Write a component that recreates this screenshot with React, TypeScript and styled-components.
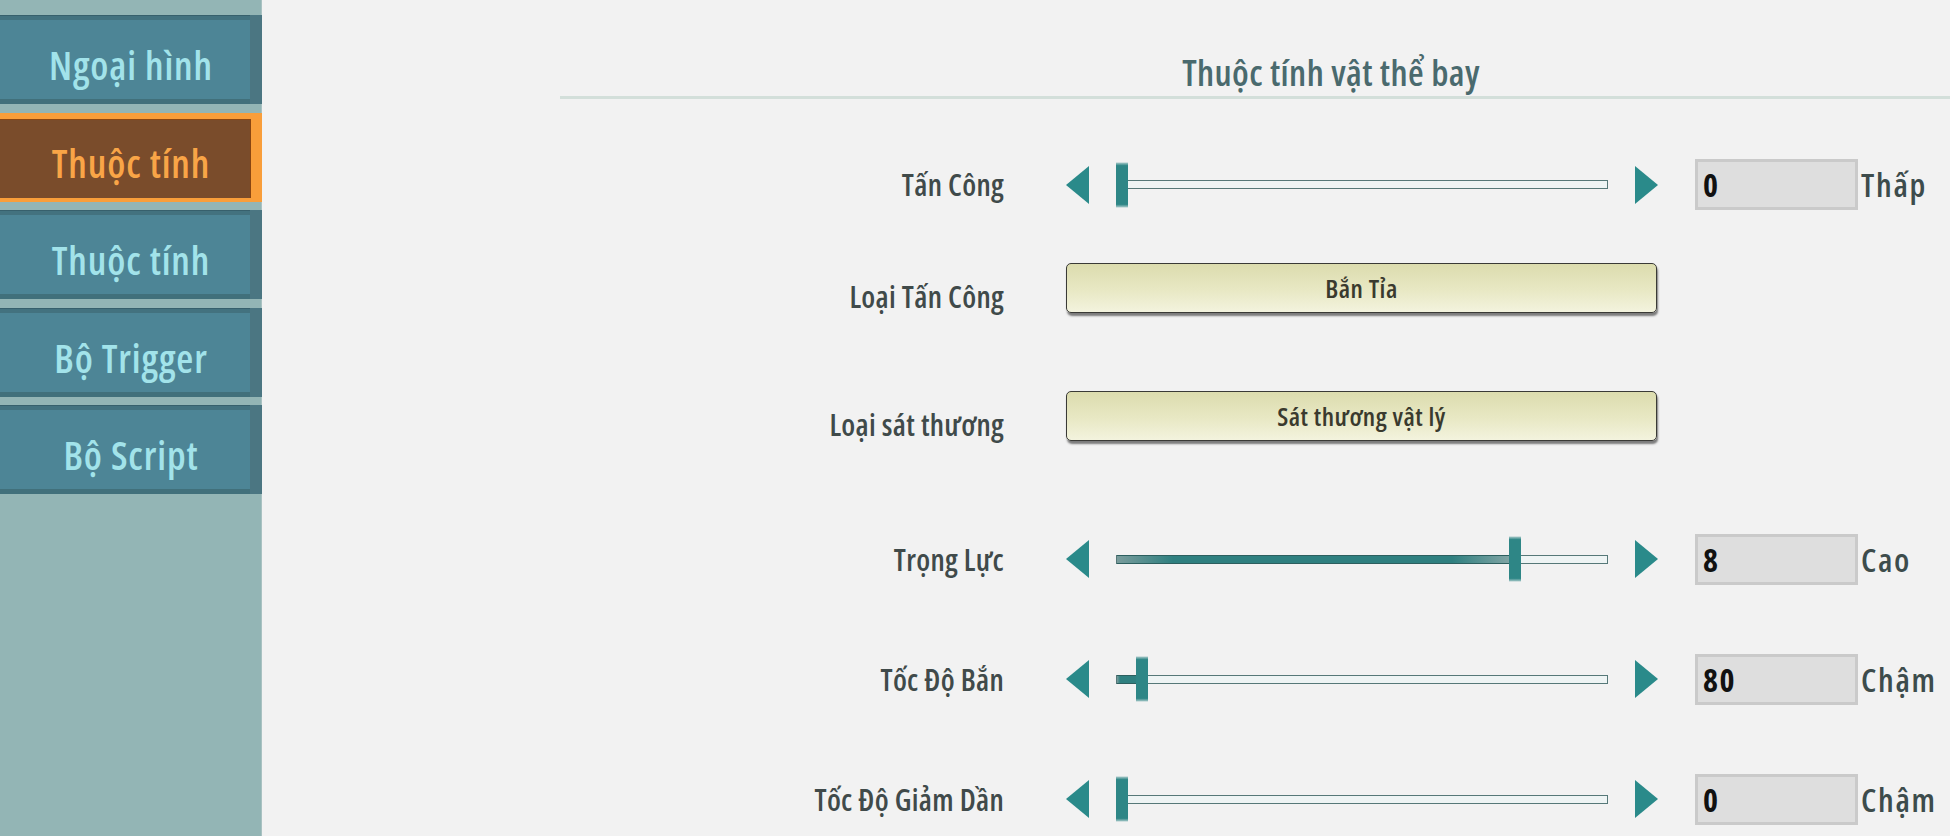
import React from "react";
import styled, { createGlobalStyle } from "styled-components";

const FONT = `"Open Sans", "Noto Sans", "DejaVu Sans", sans-serif`;

const Global = createGlobalStyle`
  html, body { margin: 0; padding: 0; background: #f2f2f2; }
  body { font-family: ${FONT}; font-stretch: 75%; }
  #root { width: 1950px; height: 836px; overflow: hidden; }
`;

const Page = styled.div`
  display: flex;
  width: 1950px;
  height: 836px;
  overflow: hidden;
  background: #f2f2f2;
  font-family: ${FONT};
  font-stretch: 75%;
`;

const Sidebar = styled.nav`
  flex: 0 0 262px;
  display: flex;
  flex-direction: column;
  gap: 8.5px;
  padding-top: 15px;
  background: #93b5b5;
  box-shadow: inset -1px 0 0 #a9c2c2;
`;

const NavButton = styled.div<{ $active?: boolean }>`
  height: 89px;
  box-sizing: border-box;
  display: flex;
  align-items: center;
  justify-content: center;
  padding-top: 10px;
  font-weight: 600;
  font-size: 39px;
  letter-spacing: 0.9px;
  color: ${(p) => (p.$active ? "#f9a547" : "#a2e3ea")};
  background: ${(p) => (p.$active ? "#7a4c2b" : "#4d8596")};
  box-shadow: ${(p) =>
    p.$active
      ? "inset -11px 0 0 #f99e3a, inset 0 6px 0 #f99e3a, inset 0 -4px 0 #f99e3a, inset -12px 0 0 #8a4612, inset 0 7px 0 #8a4612"
      : "inset -12px 0 0 #4b7682, inset 0 1px 0 #37606c, inset 0 5px 0 #43727f, inset 0 -5px 0 #41707b"};
`;

const Main = styled.main`
  flex: 1 1 auto;
  min-width: 0;
  overflow: hidden;
  display: flex;
  flex-direction: column;
  padding-top: 49px;
`;

const Header = styled.div`
  margin-left: 298px;
  width: 1542px;
  flex: 0 0 auto;
  text-align: center;
  line-height: 47px;
  border-bottom: 3px solid #d3dfda;
  font-size: 36px;
  letter-spacing: 0.4px;
  font-weight: 600;
  color: #4a6a6e;
`;

const Rows = styled.div`
  display: flex;
  flex-direction: column;
  margin-top: 60px;
`;

const Row = styled.div<{ $mt: number; $h: number }>`
  display: grid;
  grid-template-columns: 804px 592px 200px auto;
  align-items: center;
  height: ${(p) => p.$h}px;
  margin-top: ${(p) => p.$mt}px;
`;

const LabelCell = styled.div`
  display: flex;
  justify-content: flex-end;
  padding-right: 62px;
`;

const LabelText = styled.span<{ $shift?: number }>`
  font-size: 30px;
  letter-spacing: 0.3px;
  font-weight: 600;
  color: #404a4a;
  white-space: nowrap;
  position: relative;
  top: ${(p) => p.$shift ?? 0}px;
`;

const Control = styled.div`
  display: flex;
  align-items: center;
  justify-content: space-between;
  width: 592px;
`;

const Track = styled.div`
  position: relative;
  width: 492px;
  height: 9px;
  box-sizing: border-box;
  border: 1.5px solid #567878;
  background: #eef4f4;
`;

const Fill = styled.div`
  position: absolute;
  left: 0;
  top: -1px;
  bottom: -1px;
  background: linear-gradient(
    to right,
    #7a9c9c 0%,
    #2f8080 14%,
    #2f8080 84%,
    #8aa9a9 100%
  );
  border-top: 1px solid #2d5f5f;
  border-bottom: 1px solid #2d5f5f;
`;

const Thumb = styled.div`
  position: absolute;
  top: 50%;
  width: 12px;
  height: 45px;
  transform: translateY(-50%);
  background: linear-gradient(
    to bottom,
    rgba(46, 134, 134, 0.35) 0,
    #2e8686 7%,
    #2e8686 93%,
    rgba(46, 134, 134, 0.35) 100%
  );
`;

const ValueBox = styled.div`
  box-sizing: border-box;
  height: 51px;
  width: 163px;
  margin-left: 37px;
  display: flex;
  align-items: center;
  padding-left: 5px;
  background: #dedede;
  border: 3px solid #cacaca;
  font-size: 32px;
  letter-spacing: 1.5px;
  font-weight: 700;
  color: #111;
`;

const Unit = styled.div`
  padding-left: 3px;
  font-size: 33px;
  letter-spacing: 1.7px;
  font-weight: 600;
  color: #3d4c4c;
  white-space: nowrap;
`;

const SelectButton = styled.div`
  box-sizing: border-box;
  width: 591px;
  height: 50px;
  display: flex;
  align-items: center;
  justify-content: center;
  border: 1.5px solid #3a3a36;
  border-radius: 5px;
  background: linear-gradient(to bottom, #dcdcae 0%, #e8e8c4 55%, #f3f3de 100%);
  box-shadow: 1px 3px 2px rgba(60, 60, 60, 0.65);
  font-size: 26px;
  letter-spacing: 0.5px;
  font-weight: 600;
  color: #3a3a2e;
`;

const ArrowSvg = styled.svg`
  display: block;
  width: 23px;
  height: 38px;
`;

const Arrow = ({ dir }: { dir: "left" | "right" }) => (
  <ArrowSvg viewBox="0 0 23 38">
    <polygon
      points={dir === "left" ? "23,0 23,38 0,19" : "0,0 0,38 23,19"}
      fill="#2a8a8a"
    />
  </ArrowSvg>
);

type SliderRow = {
  kind: "slider";
  label: string;
  pos: number;
  fill: number;
  value: string;
  unit: string;
  mt: number;
};
type ButtonRow = { kind: "button"; label: string; text: string; mt: number };

const rows: (SliderRow | ButtonRow)[] = [
  { kind: "slider", label: "Tấn Công", pos: 0, fill: 0, value: "0", unit: "Thấp", mt: 0 },
  { kind: "button", label: "Loại Tấn Công", text: "Bắn Tỉa", mt: 53 },
  { kind: "button", label: "Loại sát thương", text: "Sát thương vật lý", mt: 78 },
  { kind: "slider", label: "Trọng Lực", pos: 393, fill: 399, value: "8", unit: "Cao", mt: 92.5 },
  { kind: "slider", label: "Tốc Độ Bắn", pos: 20, fill: 22, value: "80", unit: "Chậm", mt: 69 },
  { kind: "slider", label: "Tốc Độ Giảm Dần", pos: 0, fill: 0, value: "0", unit: "Chậm", mt: 69 },
];

const navItems = ["Ngoại hình", "Thuộc tính", "Thuộc tính", "Bộ Trigger", "Bộ Script"];

export default function App() {
  return (
    <>
      <Global />
      <Page>
        <Sidebar>
          {navItems.map((n, i) => (
            <NavButton key={i} $active={i === 1}>
              {n}
            </NavButton>
          ))}
        </Sidebar>
        <Main>
          <Header>Thuộc tính vật thể bay</Header>
          <Rows>
            {rows.map((r, i) =>
              r.kind === "slider" ? (
                <Row key={i} $mt={r.mt} $h={51}>
                  <LabelCell>
                    <LabelText>{r.label}</LabelText>
                  </LabelCell>
                  <Control>
                    <Arrow dir="left" />
                    <Track>
                      {r.fill > 0 && <Fill style={{ width: r.fill }} />}
                      <Thumb style={{ left: r.pos - 1.5 }} />
                    </Track>
                    <Arrow dir="right" />
                  </Control>
                  <ValueBox>{r.value}</ValueBox>
                  <Unit>{r.unit}</Unit>
                </Row>
              ) : (
                <Row key={i} $mt={r.mt} $h={50}>
                  <LabelCell>
                    <LabelText $shift={8}>{r.label}</LabelText>
                  </LabelCell>
                  <Control>
                    <SelectButton>{r.text}</SelectButton>
                  </Control>
                </Row>
              )
            )}
          </Rows>
        </Main>
      </Page>
    </>
  );
}
